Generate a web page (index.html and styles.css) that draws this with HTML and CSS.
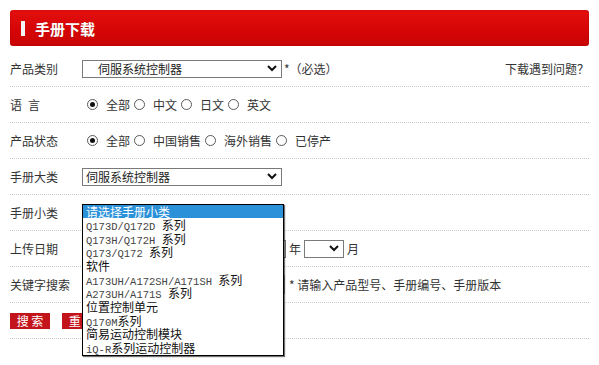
FILE: index.html
```html
<!DOCTYPE html>
<html lang="zh-CN">
<head>
<meta charset="utf-8">
<title>手册下载</title>
<link rel="stylesheet" href="styles.css">
</head>
<body>
<div class="page">
  <div class="header">
    <span class="bar"></span>
    <h2 class="title">手册下载</h2>
  </div>

  <div class="row">
    <div class="label">产品类别</div>
    <div class="select w200 indent"><span class="val">伺服系统控制器</span><svg class="chev" viewBox="0 0 10 7" width="10" height="7"><polyline points="1,1 5,5 9,1" fill="none" stroke="#111" stroke-width="2"/></svg></div>
    <span class="note req">*<span class="fw">（必选）</span></span>
    <a class="help">下载遇到问题<span class="fw">？</span></a>
  </div>

  <div class="row">
    <div class="label"><span class="sp">语</span>言</div>
    <div class="radios">
      <span class="radio on"></span><span class="opt">全部</span>
      <span class="radio"></span><span class="opt">中文</span>
      <span class="radio"></span><span class="opt">日文</span>
      <span class="radio"></span><span class="opt">英文</span>
    </div>
  </div>

  <div class="row">
    <div class="label">产品状态</div>
    <div class="radios">
      <span class="radio on"></span><span class="opt">全部</span>
      <span class="radio"></span><span class="opt">中国销售</span>
      <span class="radio"></span><span class="opt">海外销售</span>
      <span class="radio"></span><span class="opt">已停产</span>
    </div>
  </div>

  <div class="row">
    <div class="label">手册大类</div>
    <div class="select w200"><span class="val">伺服系统控制器</span><svg class="chev" viewBox="0 0 10 7" width="10" height="7"><polyline points="1,1 5,5 9,1" fill="none" stroke="#111" stroke-width="2"/></svg></div>
  </div>

  <div class="row">
    <div class="label">手册小类</div>
    <div class="anchor">
      <div class="select w200"><span class="val">请选择手册小类</span></div>
      <ul class="listbox">
        <li class="sel">请选择手册小类</li>
        <li><span class="mono">Q173D/Q172D </span>系列</li>
        <li><span class="mono">Q173H/Q172H </span>系列</li>
        <li><span class="mono">Q173/Q172 </span>系列</li>
        <li>软件</li>
        <li><span class="mono">A173UH/A172SH/A171SH </span>系列</li>
        <li><span class="mono">A273UH/A171S </span>系列</li>
        <li>位置控制单元</li>
        <li><span class="mono">Q170M</span>系列</li>
        <li>简易运动控制模块</li>
        <li><span class="mono">iQ-R</span>系列运动控制器</li>
      </ul>
    </div>
  </div>

  <div class="row">
    <div class="label">上传日期</div>
    <div class="select w204"><span class="val"></span></div>
    <span class="unit">年</span>
    <div class="select w40"><span class="val"></span><svg class="chev" viewBox="0 0 10 7" width="10" height="7"><polyline points="1,1 5,5 9,1" fill="none" stroke="#111" stroke-width="2"/></svg></div>
    <span class="unit">月</span>
  </div>

  <div class="row">
    <div class="label">关键字搜索</div>
    <div class="input w203"></div>
    <span class="note kw">* 请输入产品型号、手册编号、手册版本</span>
  </div>

  <div class="row">
    <button class="btn">搜 索</button>
    <button class="btn">重 置</button>
  </div>
</div>
</body>
</html>
```

FILE: styles.css
```css
* { box-sizing: border-box; }
html, body { margin: 0; padding: 0; background: #fff; }
body {
  font-family: "Noto Sans CJK SC", "Noto Sans", sans-serif;
  font-size: 12px;
  color: #333;
  min-height: 365px;
}
.page {
  width: 599px;
  min-height: 365px;
  padding: 10px 10px 30px 10px;
}
.header {
  height: 36px;
  display: flex;
  align-items: center;
  border-radius: 3px;
  background: linear-gradient(#e40f0f, #d50505 60%, #c80404);
  box-shadow: inset 0 0 2px rgba(120,0,0,.35);
}
.bar {
  width: 4px;
  height: 15px;
  background: #f4f4f4;
  margin-left: 11px;
}
.title {
  margin: 0 0 0 10px;
  font-size: 15px;
  font-weight: bold;
  color: #fff;
  line-height: 1;
  text-shadow: 0 0 1px rgba(80,0,0,.4);
}
.row {
  display: flex;
  align-items: center;
  height: 36px;
  border-bottom: 1px dotted #c8c8c8;
}
.header + .row { margin-top: 5px; }
.label {
  width: 72px;
  flex: none;
  color: #333;
}
.label .sp { margin-right: 6px; }
.select {
  height: 18px;
  border: 1px solid #7a7a7a;
  background: #fff;
  display: flex;
  align-items: center;
  padding: 0 4px 0 3px;
  color: #222;
  font-size: 12px;
  line-height: 16px;
}
.select .val { flex: 1; white-space: nowrap; overflow: hidden; }
.select.indent { padding-left: 15px; }
.chev { flex: none; }
.w200 { width: 200px; }
.w204 { width: 204px; }
.w40 { width: 40px; }
.w203 { width: 203px; }
.input {
  height: 19px;
  border: 1px solid #a9a9a9;
  background: #fff;
}
.note { color: #333; white-space: nowrap; }
.note.req { margin-left: 2px; }
.note.kw { margin-left: 4px; }
.fw {
  font-variant-east-asian: full-width;
  font-feature-settings: "fwid" 1;
}
.help {
  margin-left: auto;
  margin-right: 0;
  color: #333;
  text-decoration: none;
}
.unit { margin: 0 3px; }
.radios {
  display: flex;
  align-items: center;
  padding-left: 1px;
}
.radio {
  width: 11px;
  height: 11px;
  border: 1px solid #5a5a5a;
  border-radius: 50%;
  margin: 0 8px 0 4px;
  display: flex;
  align-items: center;
  justify-content: center;
  background: #fff;
}
.radio.on::after {
  content: "";
  width: 5px;
  height: 5px;
  border-radius: 50%;
  background: #111;
}
.opt { white-space: nowrap; }
.anchor { position: relative; }
.listbox {
  position: absolute;
  left: 0;
  top: 0;
  z-index: 5;
  width: 202px;
  height: 152px;
  margin: 0;
  padding: 0;
  list-style: none;
  background: #fff;
  border: 1px solid #000;
  box-shadow: 1px 1px 1px rgba(0,0,0,.55);
  display: grid;
  grid-template-rows: repeat(11, 13.636px);
  overflow: hidden;
}
.listbox li {
  display: block;
  padding-left: 3px;
  font-size: 12px;
  line-height: 13.636px;
  color: #111;
  white-space: nowrap;
}
.listbox li.sel {
  background: #2b91d9;
  color: #fff;
}
.mono {
  font-family: "Liberation Mono", monospace;
  font-size: 10.5px;
  color: #444;
  white-space: pre;
}
.btn {
  width: 40px;
  height: 16px;
  padding: 0;
  border: 0;
  background: #c4141b;
  color: #fff;
  font-family: "Noto Sans CJK SC", sans-serif;
  font-size: 12px;
  line-height: 16px;
  margin-right: 12px;
}
```
